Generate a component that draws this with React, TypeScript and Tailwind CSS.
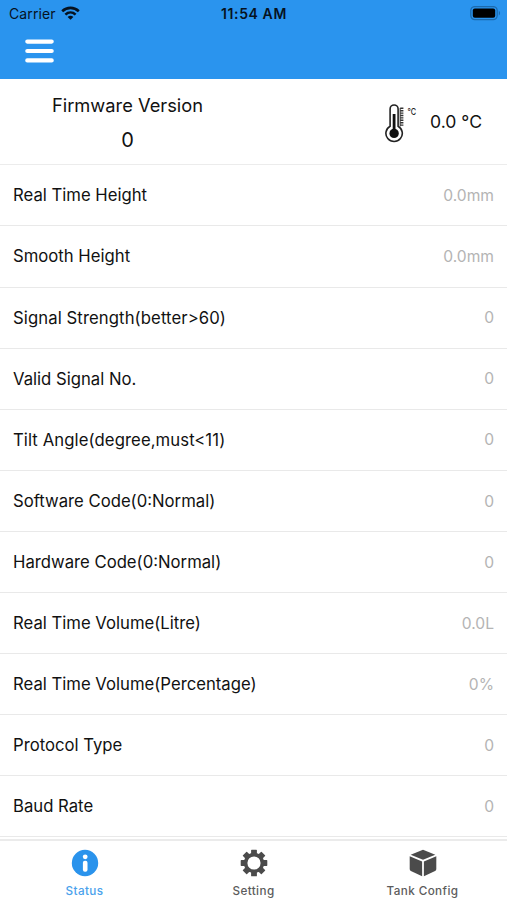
import React from 'react';
import { clsx } from 'clsx';

interface StatusItem {
  label: string;
  value: string;
  wide?: boolean;
}

const items: StatusItem[] = [
  { label: 'Real Time Height', value: '0.0mm' },
  { label: 'Smooth Height', value: '0.0mm' },
  { label: 'Signal Strength(better>60)', value: '0', wide: true },
  { label: 'Valid Signal No.', value: '0' },
  { label: 'Tilt Angle(degree,must<11)', value: '0', wide: true },
  { label: 'Software Code(0:Normal)', value: '0' },
  { label: 'Hardware Code(0:Normal)', value: '0' },
  { label: 'Real Time Volume(Litre)', value: '0.0L' },
  { label: 'Real Time Volume(Percentage)', value: '0%' },
  { label: 'Protocol Type', value: '0' },
  { label: 'Baud Rate', value: '0' },
];

function MenuIcon() {
  return (
    <svg width="29" height="24" viewBox="0 0 29 24" stroke="#fff" strokeWidth="4.2" strokeLinecap="round">
      <path d="M2.3 2.6h24.4M2.3 12h24.4M2.3 21.4h24.4" />
    </svg>
  );
}

function WifiIcon() {
  return (
    <svg width="19" height="14" viewBox="0 0 19 14" fill="none" stroke="#06121f" strokeWidth="2.6">
      <path d="M1.2 5.2C6 .7 13 .7 17.8 5.2" />
      <path d="M4.4 8.6c3-2.8 7.2-2.8 10.2 0" />
      <path d="M9.5 13.8 6.6 11c1.7-1.6 4.1-1.6 5.8 0z" fill="#06121f" stroke="none" />
    </svg>
  );
}

function BatteryIcon() {
  return (
    <svg width="31" height="15" viewBox="0 0 31 15" fill="none">
      <rect x="0.8" y="0.6" width="26.4" height="13" rx="4" stroke="#1c6aad" strokeWidth="1.3" />
      <rect x="2.8" y="2.5" width="22.4" height="9.2" rx="2" fill="#000" />
      <path d="M28.8 4.8v4.6c1.7-.8 1.7-3.8 0-4.6z" fill="#1c6aad" />
    </svg>
  );
}

function ThermometerIcon() {
  return (
    <svg width="33" height="40" viewBox="0 0 33 40" fill="none">
      <path
        d="M5.1 23.2V6a4 4 0 0 1 8 0v17.2a8.2 8.2 0 1 1-8 0z"
        stroke="#222"
        strokeWidth="1.6"
      />
      <path d="M9.1 11v19" stroke="#111" strokeWidth="2.8" />
      <circle cx="9.1" cy="30.4" r="4.7" fill="#111" />
      <path d="M15.2 5v18.4" stroke="#555" strokeWidth="1.2" />
      <path d="M16.8 4.6v19" stroke="#333" strokeWidth="3.2" strokeDasharray="1.4 1" />
      <text x="22.6" y="11.8" fontSize="9" textLength="8.6" lengthAdjust="spacingAndGlyphs" fontFamily="Inter, sans-serif" fontWeight="500" fill="#222">
        ℃
      </text>
    </svg>
  );
}

function InfoIcon() {
  return (
    <svg width="28" height="28" viewBox="0 0 28 28">
      <circle cx="14" cy="14" r="13.2" fill="#2a93ec" />
      <circle cx="14.2" cy="7.8" r="2.4" fill="#fff" />
      <rect x="11.9" y="11.8" width="4.6" height="11" rx="2" fill="#fff" />
    </svg>
  );
}

function GearIcon() {
  const angles = [0, 45, 90, 135, 180, 225, 270, 315];
  return (
    <svg width="28" height="28" viewBox="0 0 28 28" fill="#4b4b4b">
      {angles.map((a) => (
        <rect key={a} x="11.1" y="0.7" width="5.8" height="6" rx="0.6" transform={`rotate(${a} 14 14)`} />
      ))}
      <circle cx="14" cy="14" r="8.4" fill="none" stroke="#4b4b4b" strokeWidth="3.6" />
    </svg>
  );
}

function CubeIcon() {
  return (
    <svg width="28" height="28" viewBox="0 0 28 28" fill="#4b4b4b">
      <path d="M14 .8 26.3 5.8 14 10.8 1.7 5.8z" />
      <path d="M.7 7.3 13.1 12.6v14.6L1.9 22Q.7 21.4.7 20.1z" />
      <path d="M27.3 7.3 14.9 12.6v14.6L26.1 22q1.2-.6 1.2-1.9z" />
    </svg>
  );
}

const tabs = [
  { name: 'Status', icon: InfoIcon, active: true },
  { name: 'Setting', icon: GearIcon, active: false },
  { name: 'Tank Config', icon: CubeIcon, active: false },
];

export default function App() {
  return (
    <div className="flex h-[900px] w-[507px] flex-col overflow-hidden bg-white font-['Inter','Liberation_Sans',sans-serif] text-[#111]">
      {/* Header */}
      <header className="h-[79px] shrink-0 bg-[#2a94ee]">
        <div className="grid h-7 grid-cols-3 items-center pl-[7px] pr-[6px] text-[14px] text-[#06121f]">
          <div className="flex items-center gap-[5px] pb-[2px] pl-[2px]">
            <span className="tracking-[0.1px]">Carrier</span>
            <WifiIcon />
          </div>
          <span className="pb-px text-center font-semibold tracking-[0.6px]">11:54 AM</span>
          <div className="flex justify-end pb-px">
            <BatteryIcon />
          </div>
        </div>
        <button className="ml-[25px] mt-[11px] block" aria-label="Menu">
          <MenuIcon />
        </button>
      </header>

      {/* Summary */}
      <section className="flex h-[86.4px] shrink-0 items-center justify-between border-b border-[#ececec] pt-[2px]">
        <div className="flex w-[255px] flex-col items-center">
          <span className="text-[18.3px] leading-[35px]">Firmware Version</span>
          <span className="text-[20px] leading-[35px]">0</span>
        </div>
        <div className="flex items-center gap-[12px] pr-[25px]">
          <ThermometerIcon />
          <span className="text-[17.6px]">0.0 °C</span>
        </div>
      </section>

      {/* Readings */}
      <main className="min-h-0 flex-1 overflow-hidden">
        {items.map((item) => (
          <div
            key={item.label}
            className="flex h-[61.07px] items-center justify-between border-b border-[#e9e9e9] px-[13px] pt-px"
          >
            <span className={clsx('text-[16.7px]', item.wide && 'tracking-[0.09px]')}>{item.label}</span>
            <span className="text-[15.6px] text-[#b4b4b4]">{item.value}</span>
          </div>
        ))}
      </main>

      {/* Bottom tabs */}
      <nav className="grid h-[61px] shrink-0 grid-cols-3 border-t-2 border-[#ebebeb] bg-white">
        {tabs.map(({ name, icon: Icon, active }) => (
          <button
            key={name}
            className={clsx(
              'flex flex-col items-center pt-[8px] text-[11.7px] font-medium',
              active ? 'text-[#4aa2ec]' : 'text-[#5c5c5c]'
            )}
          >
            <Icon />
            <span className="mt-[6px] tracking-[0.4px]">{name}</span>
          </button>
        ))}
      </nav>
    </div>
  );
}
